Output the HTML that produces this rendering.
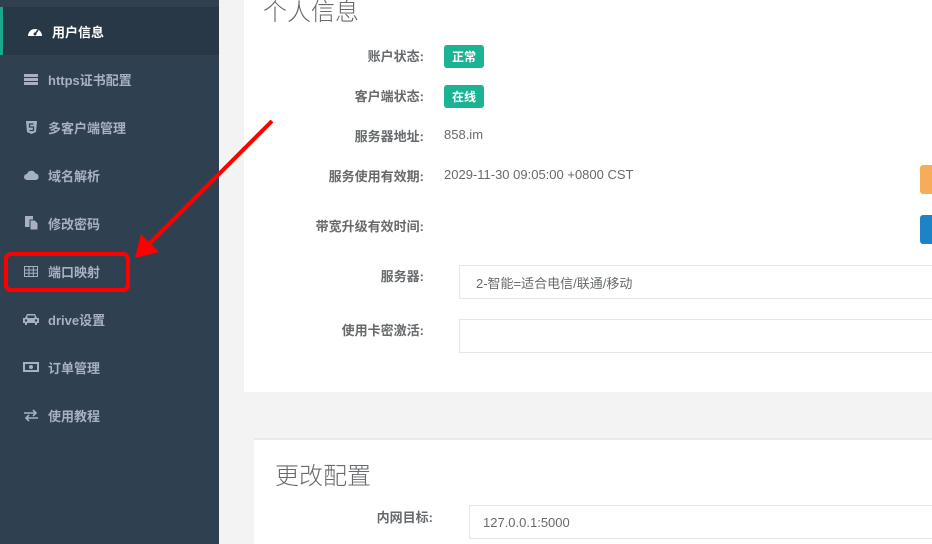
<!DOCTYPE html>
<html><head><meta charset="utf-8"><style>
*{margin:0;padding:0;box-sizing:border-box}
body{width:932px;height:544px;overflow:hidden;background:#f3f3f4;font-family:"Liberation Sans","Noto Sans CJK SC",sans-serif;position:relative}
.side{position:absolute;left:0;top:0;width:219px;height:544px;background:#2f4050}
.item{position:absolute;left:0;width:219px;height:48px;color:#a7b1c2;font-size:13px;font-weight:bold;display:flex;align-items:center}
.item .ic{width:16px;flex-shrink:0;margin-left:23px;margin-right:9px;display:flex;justify-content:center}
.item svg{flex-shrink:0;overflow:visible}
.active{background:#293846;border-left:3px solid #19aa8d;color:#fff}
.active .ic{margin-left:24px}
.panel{position:absolute;background:#fff}
.lbl{position:absolute;right:508px;font-size:13px;font-weight:bold;color:#676a6c;text-align:right;white-space:nowrap}
.val{position:absolute;left:444px;font-size:13px;color:#676a6c}
.badge{position:absolute;left:444px;background:#1ab394;color:#fff;font-size:12px;font-weight:bold;padding:3px 8px;border-radius:3px}
.inp{position:absolute;border:1px solid #e5e6e7;background:#fff;font-size:13px;color:#676a6c;padding:0 16px;display:flex;align-items:center}
</style></head><body>
<div class="side">
<div class="item active" style="top:7px"><span class="ic"><svg width="16" height="12" viewBox="0 0 16 12"><path d="M1 11A7 7 0 0 1 15 11Z" fill="#fff"/><circle cx="8" cy="9" r="1.5" fill="#293846"/><path d="M8 9L11 5" stroke="#293846" stroke-width="1.5"/></svg></span>用户信息</div>
<div class="item" style="top:55px"><span class="ic"><svg width="14" height="11"><rect y="0" width="14" height="3" fill="#a7b1c2"/><rect y="4" width="14" height="3" fill="#a7b1c2"/><rect y="8" width="14" height="3" fill="#a7b1c2"/></svg></span>https证书配置</div>
<div class="item" style="top:103px"><span class="ic"><svg width="11" height="13"><path d="M0 0H11L10 11L5.5 13L1 11Z" fill="#a7b1c2"/><path d="M7.5 3H3.5V6H7.5V9.5H3.5" stroke="#2f4050" stroke-width="1.3" fill="none"/></svg></span>多客户端管理</div>
<div class="item" style="top:151px"><span class="ic"><svg width="15" height="10"><path d="M3 10A3 3 0 0 1 3 4A4.5 4.5 0 0 1 11.5 3.5A3.3 3.3 0 0 1 12 10Z" fill="#a7b1c2"/></svg></span>域名解析</div>
<div class="item" style="top:199px"><span class="ic"><svg width="13" height="14"><rect x="0" y="0" width="8" height="11" fill="#a7b1c2"/><path d="M5 4H10L13 7V14H5Z" fill="#a7b1c2" stroke="#2f4050"/></svg></span>修改密码</div>
<div class="item" style="top:247px"><span class="ic"><svg width="14" height="11"><rect x=".5" y=".5" width="13" height="10" fill="none" stroke="#a7b1c2"/><path d="M.5 4H13.5M.5 7.3H13.5M5 .5V10.5M9.3 .5V10.5" stroke="#a7b1c2"/></svg></span>端口映射</div>
<div class="item" style="top:295px"><span class="ic"><svg width="16" height="12"><path d="M4 1H12L14 5H16V10H14V12H12V10H4V12H2V10H0V5H2Z" fill="#a7b1c2"/><rect x="4.5" y="2.5" width="7" height="2.5" fill="#2f4050"/><circle cx="3" cy="7.5" r="1.2" fill="#2f4050"/><circle cx="13" cy="7.5" r="1.2" fill="#2f4050"/></svg></span>drive设置</div>
<div class="item" style="top:343px"><span class="ic"><svg width="16" height="10"><rect x="1" y="1" width="14" height="8" fill="none" stroke="#a7b1c2" stroke-width="2"/><circle cx="8" cy="5" r="2" fill="#a7b1c2"/></svg></span>订单管理</div>
<div class="item" style="top:391px"><span class="ic"><svg width="14" height="11"><path d="M0 3H12M9 0L12 3L9 6M14 8H2M5 5L2 8L5 11" stroke="#a7b1c2" stroke-width="1.6" fill="none"/></svg></span>使用教程</div>
</div>

<div class="panel" style="left:244px;top:0;width:688px;height:392px"></div>
<div style="position:absolute;left:263px;top:-8px;font-size:24px;color:#676a6c;font-weight:300">个人信息</div>
<div class="lbl" style="top:46px">账户状态:</div><div class="badge" style="top:45px">正常</div>
<div class="lbl" style="top:86px">客户端状态:</div><div class="badge" style="top:85px">在线</div>
<div class="lbl" style="top:126px">服务器地址:</div><div class="val" style="top:127px">858.im</div>
<div class="lbl" style="top:166px">服务使用有效期:</div><div class="val" style="top:167px">2029-11-30 09:05:00 +0800 CST</div>
<div style="position:absolute;left:920px;top:165px;width:20px;height:29px;background:#f8ac59;border-radius:3px"></div>
<div class="lbl" style="top:216px">带宽升级有效时间:</div>
<div style="position:absolute;left:920px;top:215px;width:20px;height:29px;background:#1c84c6;border-radius:3px"></div>
<div class="lbl" style="top:266px">服务器:</div>
<div class="inp" style="left:459px;top:265px;width:480px;height:34px">2-智能=适合电信/联通/移动</div>
<div class="lbl" style="top:320px">使用卡密激活:</div>
<div class="inp" style="left:459px;top:319px;width:480px;height:34px"></div>

<div class="panel" style="left:254px;top:438px;width:678px;height:106px;border-top:2px solid #e7eaec"></div>
<div style="position:absolute;left:275px;top:456px;font-size:24px;color:#676a6c;font-weight:300">更改配置</div>
<div class="lbl" style="top:507px;right:499px">内网目标:</div>
<div class="inp" style="left:469px;top:505px;width:470px;height:34px;padding-left:13px">127.0.0.1:5000</div>

<div style="position:absolute;left:4px;top:252px;width:126px;height:40px;border:4px solid #f00;border-radius:7px"></div>
<svg style="position:absolute;left:0;top:0" width="932" height="544"><line x1="272" y1="121" x2="148" y2="245" stroke="#f00" stroke-width="4"/><path d="M135 258L141 234L159 252Z" fill="#f00"/></svg>
</body></html>
